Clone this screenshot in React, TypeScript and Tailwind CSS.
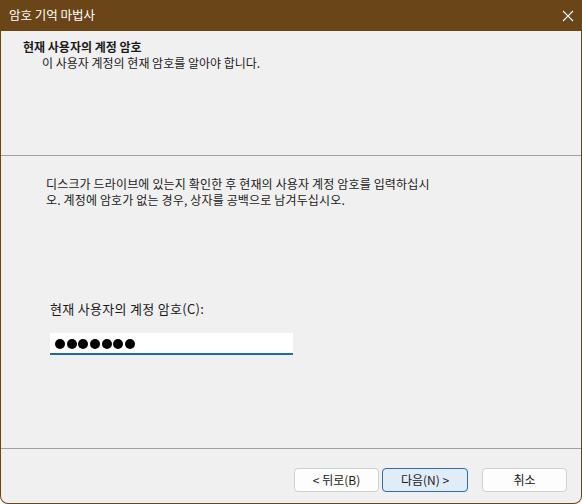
import React from 'react';

const font = { fontFamily: '"Noto Sans CJK KR", "Noto Sans", sans-serif' };

export default function App() {
  return (
    <div className="w-[582px] h-[504px] bg-white" style={font}>
      <div className="w-full h-full flex flex-col bg-[#6a4517] rounded-b-[8px] overflow-hidden">
        {/* title bar */}
        <div className="h-[31px] flex items-center justify-between pl-[9px] pr-[8px] text-white text-[12.5px]">
          <span>암호 기억 마법사</span>
          <svg width="12" height="12" viewBox="0 0 12 12">
            <path d="M1 1L11 11M11 1L1 11" stroke="#fff" strokeWidth="1.1" />
          </svg>
        </div>

        <div className="flex-1 flex flex-col mx-[1px] mb-[1px] bg-[#f0f0f0] rounded-b-[7px] text-[12px] text-[#1a1a1a] leading-[16px]">
          {/* header */}
          <div className="h-[124px] pt-[8px] pl-[22px]">
            <div className="font-bold">현재 사용자의 계정 암호</div>
            <div className="pl-[19px]">이 사용자 계정의 현재 암호를 알아야 합니다.</div>
          </div>
          <div className="h-[1px] bg-[#a0a0a0]" />

          {/* body */}
          <div className="flex-1 pt-[20px] pl-[45px] pr-[40px]">
            <div className="w-[420px] tracking-[0.15px]">
              디스크가 드라이브에 있는지 확인한 후 현재의 사용자 계정 암호를 입력하십시
              <br />
              오. 계정에 암호가 없는 경우, 상자를 공백으로 남겨두십시오.
            </div>
            <div className="mt-[93px] pl-[4px] text-[13px] tracking-[0.3px]">현재 사용자의 계정 암호(C):</div>
            <div className="mt-[16px] ml-[4px] w-[243px] h-[22px] bg-white border-b-2 border-[#1f6aa5] flex items-center pl-[5px] pt-[2px] gap-[1.7px]">
              {[0, 1, 2, 3, 4, 5, 6].map(i => (
                <div key={i} className="w-[10px] h-[10px] rounded-full bg-black" />
              ))}
            </div>
          </div>

          <div className="h-[1px] bg-[#a0a0a0]" />
          {/* footer */}
          <div className="h-[54px] flex items-start pt-[19px] pl-[293px]">
            <button className="w-[85px] h-[24px] rounded-[4px] border border-[#d0d0d0] bg-[#fdfdfd] text-[12px] text-[#1a1a1a]">
              &lt; 뒤로(B)
            </button>
            <button className="ml-[3px] w-[86px] h-[24px] rounded-[4px] border border-[#2b6ca3] bg-[#e0ecf8] text-[12px] text-[#1a1a1a]">
              다음(N) &gt;
            </button>
            <button className="ml-[14px] w-[85px] h-[24px] rounded-[4px] border border-[#d0d0d0] bg-[#fdfdfd] text-[12px] text-[#1a1a1a]">
              취소
            </button>
          </div>
        </div>
      </div>
    </div>
  );
}
